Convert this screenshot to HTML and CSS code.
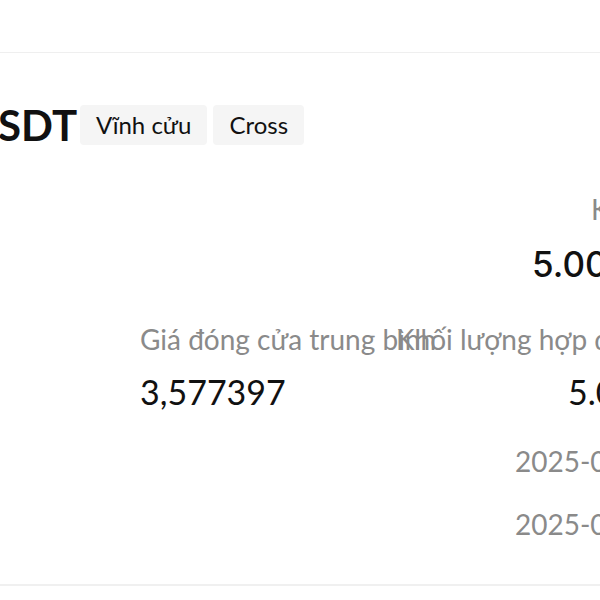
FILE: index.html
```html
<!DOCTYPE html>
<html>
<head>
<meta charset="utf-8">
<title>Hợp đồng USDT</title>
<link rel="stylesheet" href="styles.css">
</head>
<body>
<div class="page">
  <div class="topbar"></div>

  <div class="contract-head">
    <span class="contract-name">SDT</span>
    <span class="tag">Vĩnh cửu</span>
    <span class="tag">Cross</span>
  </div>

  <div class="summary">
    <div class="summary-label">Khối lượng</div>
    <div class="summary-value">5.000 USDT</div>
  </div>

  <div class="stats">
    <div class="stat">
      <div class="stat-label">Giá đóng cửa trung bình</div>
      <div class="stat-value">3,577397</div>
    </div>
    <div class="stat stat-right">
      <div class="stat-label">Khối lượng hợp đồng</div>
      <div class="stat-value">5.000</div>
    </div>
  </div>

  <div class="times">
    <div class="time">2025-06-12 08:00:00</div>
    <div class="time">2025-06-12 16:00:00</div>
  </div>

  <div class="bottombar"></div>
</div>
</body>
</html>
```

FILE: styles.css
```css
body {
  margin: 0;
  overflow: hidden;
  background: #fff;
  font-family: Lato, "Noto Sans", sans-serif;
  color: #111;
}

.page {
  width: 900px;
}

/* thin separators top and bottom */
.topbar {
  height: 52px;
  border-bottom: 1px solid #efefef;
}

.bottombar {
  margin-top: 46px;
  border-bottom: 2px solid #f0f0f0;
}

.contract-head {
  display: flex;
  align-items: center;
  margin-top: 51px;
  height: 42px;
}

.contract-name {
  font-size: 42px;
  line-height: 42px;
  font-weight: 700;
  margin-left: -2px;
  margin-right: 3px;
}

.tag {
  height: 40px;
  line-height: 40px;
  padding: 0 16px;
  margin-right: 6px;
  font-size: 24px;
  background: #f5f5f5;
  border-radius: 4px;
}

.summary {
  display: flex;
  flex-direction: column;
  align-items: flex-start;
  margin-top: 49px;
  margin-left: 532px;
}

.summary-label {
  margin-left: 59px;
  font-size: 28px;
  line-height: 28px;
  color: #8a8a8a;
  white-space: nowrap;
}

/* medium weight figure, Lato has no 500 */
.summary-value {
  margin-top: 23px;
  font-family: Inter, Lato, sans-serif;
  font-size: 35px;
  line-height: 36px;
  font-weight: 500;
  white-space: nowrap;
}

.stats {
  display: grid;
  grid-template-columns: 256px 259px;
  margin-top: 43px;
  margin-left: 140px;
}

.stat-label {
  font-size: 28px;
  line-height: 28px;
  color: #8a8a8a;
  white-space: nowrap;
}

.stat-value {
  margin-top: 22px;
  font-size: 34px;
  line-height: 34px;
  white-space: nowrap;
}

.stat-right .stat-value {
  text-align: right;
}

.times {
  margin-top: 38px;
  margin-left: 515px;
}

.time {
  font-size: 28px;
  line-height: 28px;
  color: #8a8a8a;
  white-space: nowrap;
}

.time + .time {
  margin-top: 35px;
}
```
